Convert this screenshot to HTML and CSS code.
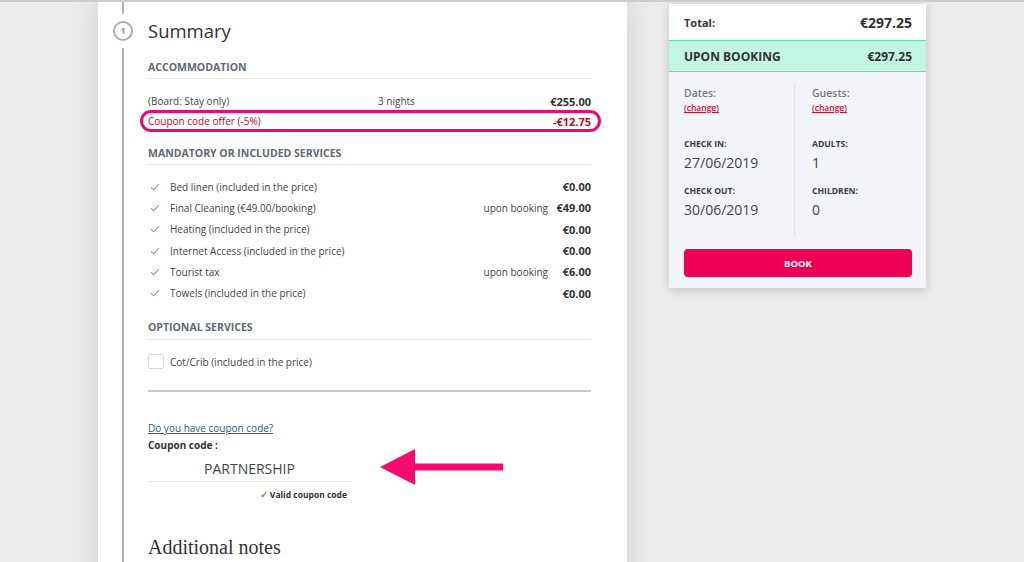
FILE: index.html
```html
<!DOCTYPE html>
<html lang="en">
<head>
<meta charset="utf-8">
<title>Summary</title>
<link rel="stylesheet" href="styles.css">
</head>
<body>
<div class="topbar"></div>
<div class="page">
  <main class="card">
    <div class="timeline">
      <div class="tl-top"></div>
      <div class="tl-circle">1</div>
      <div class="tl-line"></div>
    </div>
    <div class="content">
      <h1 class="heading">Summary</h1>

      <h2 class="section-title first">ACCOMMODATION</h2>
      <div class="acc-row board">
        <span class="desc">(Board: Stay only)</span>
        <span class="mid">3 nights</span>
        <span class="price">€255.00</span>
      </div>
      <div class="acc-row coupon-offer">
        <span class="desc">Coupon code offer (-5%)</span>
        <span class="price">-€12.75</span>
      </div>

      <h2 class="section-title">MANDATORY OR INCLUDED SERVICES</h2>
      <ul class="services">
        <li class="service"><svg class="check" viewBox="0 0 10 8" width="10" height="8"><path d="M1 4.2 L3.6 6.8 L9 1.2"/></svg><span class="desc">Bed linen (included in the price)</span><span class="mid"></span><span class="price">€0.00</span></li>
        <li class="service"><svg class="check" viewBox="0 0 10 8" width="10" height="8"><path d="M1 4.2 L3.6 6.8 L9 1.2"/></svg><span class="desc">Final Cleaning (€49.00/booking)</span><span class="mid">upon booking</span><span class="price">€49.00</span></li>
        <li class="service"><svg class="check" viewBox="0 0 10 8" width="10" height="8"><path d="M1 4.2 L3.6 6.8 L9 1.2"/></svg><span class="desc">Heating (included in the price)</span><span class="mid"></span><span class="price">€0.00</span></li>
        <li class="service"><svg class="check" viewBox="0 0 10 8" width="10" height="8"><path d="M1 4.2 L3.6 6.8 L9 1.2"/></svg><span class="desc">Internet Access (included in the price)</span><span class="mid"></span><span class="price">€0.00</span></li>
        <li class="service"><svg class="check" viewBox="0 0 10 8" width="10" height="8"><path d="M1 4.2 L3.6 6.8 L9 1.2"/></svg><span class="desc">Tourist tax</span><span class="mid">upon booking</span><span class="price">€6.00</span></li>
        <li class="service"><svg class="check" viewBox="0 0 10 8" width="10" height="8"><path d="M1 4.2 L3.6 6.8 L9 1.2"/></svg><span class="desc">Towels (included in the price)</span><span class="mid"></span><span class="price">€0.00</span></li>
      </ul>

      <h2 class="section-title optional">OPTIONAL SERVICES</h2>
      <label class="option">
        <span class="checkbox"></span>
        <span class="desc">Cot/Crib (included in the price)</span>
      </label>

      <div class="separator"></div>

      <a class="coupon-link" href="#">Do you have coupon code?</a>
      <div class="coupon-label">Coupon code :</div>
      <div class="coupon-field">
        <div class="coupon-input">PARTNERSHIP</div>
        <div class="coupon-valid"><span class="valid-check">✓</span> Valid coupon code</div>
        <svg class="arrow" viewBox="0 0 124 36" width="124" height="36"><polygon points="0,18 35,0 35,14.5 123,14.5 123,21.5 35,21.5 35,36"/></svg>
      </div>

      <h2 class="notes">Additional notes</h2>
    </div>
  </main>

  <aside class="panel">
    <div class="total-row">
      <span class="total-label">Total:</span>
      <span class="total-value">€297.25</span>
    </div>
    <div class="band">
      <span>UPON BOOKING</span>
      <span>€297.25</span>
    </div>
    <div class="panel-body">
      <div class="cols">
        <div class="col col-left">
          <div class="col-label">Dates:</div>
          <a class="change" href="#">(change)</a>
          <div class="field-label first-field">CHECK IN:</div>
          <div class="field-value">27/06/2019</div>
          <div class="field-label">CHECK OUT:</div>
          <div class="field-value">30/06/2019</div>
        </div>
        <div class="col col-right">
          <div class="col-label">Guests:</div>
          <a class="change" href="#">(change)</a>
          <div class="field-label first-field">ADULTS:</div>
          <div class="field-value">1</div>
          <div class="field-label">CHILDREN:</div>
          <div class="field-value">0</div>
        </div>
      </div>
      <button class="book">BOOK</button>
    </div>
  </aside>
</div>
</body>
</html>
```
FILE: styles.css
```css
html, body {
  margin: 0;
  padding: 0;
  overflow: hidden;
  height: 562px;
}
body {
  background: #ececec;
  font-family: "Open Sans", "Liberation Sans", sans-serif;
  color: #444;
}
.topbar {
  height: 2px;
  background: #cdcdcd;
  position: relative;
  z-index: 2;
}
.page {
  display: flex;
  align-items: flex-start;
  padding-left: 98px;
  margin-top: -2px;
}
.card {
  width: 529px;
  height: 640px;
  background: #fff;
  display: flex;
  box-shadow: 0 0 26px rgba(0, 0, 0, 0.13);
  box-sizing: border-box;
}
.timeline {
  width: 50px;
  display: flex;
  flex-direction: column;
  align-items: center;
}
.tl-top {
  width: 2px;
  height: 14px;
  background: #adb2b8;
}
.tl-circle {
  margin-top: 7px;
  width: 20px;
  height: 20px;
  box-sizing: border-box;
  border: 2px solid #aab0b6;
  border-radius: 50%;
  font-size: 9px;
  font-weight: 700;
  color: #8f959b;
  line-height: 16px;
  text-align: center;
}
.tl-line {
  margin-top: 7px;
  flex: 1;
  width: 2px;
  background: #adb2b8;
}
.content {
  width: 443px;
  display: flex;
  flex-direction: column;
}
.heading {
  margin: 19px 0 0;
  font-size: 18.5px;
  line-height: 24px;
  font-weight: 400;
  color: #333;
}
.section-title {
  margin: 13px 0 0;
  font-size: 10.5px;
  line-height: 16px;
  font-weight: 700;
  color: #5f6973;
  padding-bottom: 3px;
  border-bottom: 1px solid #e8e8e8;
}
.section-title.first {
  margin-top: 16px;
}
.section-title.optional {
  margin-top: 15px;
  padding-bottom: 4px;
}
.acc-row {
  display: grid;
  grid-template-columns: 230px 1fr auto;
  align-items: center;
  font-size: 10px;
  color: #444;
}
.acc-row.board {
  margin-top: 13px;
  height: 18px;
}
.acc-row.coupon-offer {
  grid-template-columns: 1fr auto;
  height: 22px;
  box-sizing: border-box;
  border: 3px solid #f2076d;
  border-radius: 11px;
  margin: 0 -10px 0 -8px;
  padding: 0 7px 0 5px;
  color: #d0021b;
}
.price {
  font-size: 11px;
  font-weight: 700;
  color: #333;
  text-align: right;
}
.coupon-offer .price {
  color: #d0021b;
}
.services {
  list-style: none;
  margin: 11px 0 0;
  padding: 0;
}
.service {
  display: grid;
  grid-template-columns: 22px 1fr auto 43px;
  align-items: center;
  height: 21.3px;
  font-size: 10px;
  color: #444;
}
.check {
  margin-left: 2px;
  fill: none;
  stroke: #9a9a9a;
  stroke-width: 1.1;
}
.option {
  display: flex;
  align-items: center;
  gap: 6px;
  margin-top: 14px;
  height: 16px;
  font-size: 10px;
  color: #444;
}
.checkbox {
  width: 16px;
  height: 15px;
  box-sizing: border-box;
  border: 1px solid #d7d7d7;
  border-radius: 2px;
  background: #fff;
}
.separator {
  margin-top: 20px;
  height: 2px;
  background: #c9c9c9;
}
.coupon-link {
  margin-top: 28px;
  font-size: 10px;
  line-height: 16px;
  color: #1f5d7c;
  text-decoration: underline;
  align-self: flex-start;
}
.coupon-label {
  margin-top: 2px;
  font-size: 10px;
  line-height: 14px;
  font-weight: 700;
  color: #333;
}
.coupon-field {
  position: relative;
  width: 203px;
}
.coupon-input {
  padding-top: 4px;
  line-height: 25px;
  text-align: center;
  font-size: 14px;
  color: #444;
  border-bottom: 1px solid #e6e6e6;
}
.coupon-valid {
  margin-top: 6px;
  padding-right: 4px;
  line-height: 12px;
  text-align: right;
  font-size: 8.5px;
  font-weight: 700;
  color: #333;
}
.valid-check {
  color: #6aa84f;
  font-size: 10px;
}
.arrow {
  position: absolute;
  left: 232px;
  top: -3px;
  fill: #f50a6e;
}
.notes {
  margin: 34px 0 0;
  font-family: "Liberation Serif", "Times New Roman", serif;
  font-size: 20px;
  line-height: 24px;
  font-weight: 400;
  color: #333;
}

/* Right panel */
.panel {
  margin-left: 42px;
  margin-top: 4px;
  width: 257px;
  background: #f4f5f9;
  box-shadow: 0 2px 10px rgba(0, 0, 0, 0.18);
}
.total-row {
  height: 36px;
  background: #fff;
  display: flex;
  justify-content: space-between;
  align-items: center;
  padding: 0 14px 0 15px;
  color: #333;
  font-weight: 700;
}
.total-label {
  font-size: 11px;
}
.total-value {
  font-size: 14px;
}
.band {
  height: 30px;
  background: #c3f7e3;
  border-top: 1px solid #5be4ad;
  border-bottom: 1px solid #5be4ad;
  display: flex;
  justify-content: space-between;
  align-items: center;
  padding: 0 14px 0 15px;
  font-size: 12px;
  font-weight: 700;
  color: #333;
}
.panel-body {
  padding: 11px 14px 11px 15px;
}
.cols {
  display: flex;
}
.col {
  display: flex;
  flex-direction: column;
  align-items: flex-start;
  padding: 3px 0 18px;
}
.col-left {
  width: 110px;
  border-right: 1px solid #e2e4e8;
}
.col-right {
  padding-left: 17px;
}
.col-label {
  font-size: 10.5px;
  line-height: 14px;
  font-weight: 600;
  color: #737b84;
}
.change {
  margin-top: 2px;
  font-size: 8.5px;
  line-height: 12px;
  font-weight: 600;
  color: #c8102e;
  text-decoration: underline;
}
.field-label {
  margin-top: 13px;
  font-size: 8.6px;
  line-height: 12px;
  font-weight: 700;
  color: #3a3f44;
}
.field-label.first-field {
  margin-top: 24px;
}
.field-value {
  margin-top: 4px;
  font-size: 14px;
  line-height: 18px;
  color: #444;
}
.book {
  display: block;
  margin-top: 12px;
  width: 100%;
  height: 28px;
  border: none;
  border-radius: 4px;
  background: #ee0055;
  color: #fff;
  font-family: "Open Sans", "Liberation Sans", sans-serif;
  font-size: 9.5px;
  font-weight: 700;
}
```
